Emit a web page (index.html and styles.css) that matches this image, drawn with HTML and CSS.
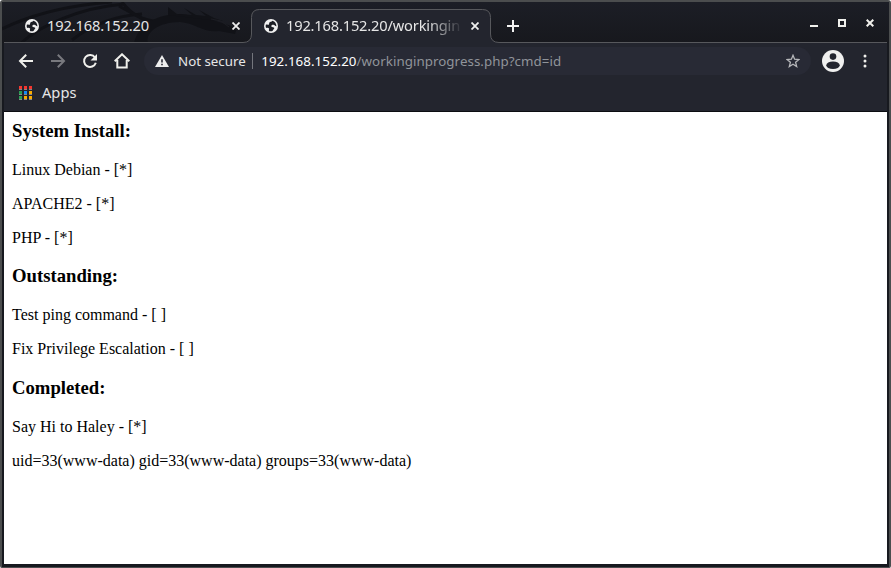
FILE: index.html
```html
<!DOCTYPE html>
<html lang="en">
<head>
<meta charset="utf-8">
<title>192.168.152.20/workinginprogress.php?cmd=id</title>
<link rel="stylesheet" href="styles.css">
</head>
<body>
<svg class="defs" aria-hidden="true">
  <symbol id="globe" viewBox="0 0 14 14">
    <circle cx="7" cy="7" r="7" fill="#f0f0f0"/>
    <path d="M8.400 1.700C7.600 3 6.300 2.600 5.400 3.600C4.800 4.400 5.600 5 4.800 5.700L2 5.500C1.500 6.500 1.600 8 2.200 9.100C3.400 8.300 4.600 8.700 5.200 9.800C4.700 10.700 4.800 11.900 5.400 12.200C6.600 12.500 8 12.300 8.800 11.800C8.600 10.600 10.300 10.300 10.300 9C10 7.600 8 8.400 7.300 7.400C7.100 6.300 8.200 5.600 9.500 5.800C10.800 6.100 11 7.300 12.400 7.200C12.500 4.800 10.900 2.400 8.400 1.700Z" fill="#1c1e25"/>
  </symbol>
</svg>
<div class="window">
  <header class="tabstrip">
    <svg class="backdrop" viewBox="0 0 887 41" aria-hidden="true">
      <g fill="none" stroke="#111217" stroke-width="3">
        <path d="M0 27C30 12 70 3 110 0"/>
        <path d="M19 41C38 24 76 6 122 2"/>
        <path d="M70 38C88 24 110 14 140 12"/>
        <path d="M117 4L144 19M120 0C130 13 140 18 157 20"/>
      </g>
      <path d="M132 41C136 25 151 13 175 12C189 12 197 17 208 17L235 26L233 32L217 29C201 31 193 21 178 20C156 20 143 31 146 41Z" fill="#111217"/>
      <path d="M166 5L175 12L190 13L182 6L194 13L204 14L197 8L212 16L221 19L208 18L166 13Z" fill="#111217"/>
      <path d="M209 17L219 19L227 25" fill="none" stroke="#1c1d23"/>
      <path d="M2 40.500H241Q249.500 40.500 249.500 32V15.500Q249.500 7.500 257.500 7.500H480.500Q488.500 7.500 488.500 15.500V32Q488.500 40.500 497 40.500H885V42H2Z" fill="#23252e"/>
      <path d="M2 40.500H241Q249.500 40.500 249.500 32V15.500Q249.500 7.500 257.500 7.500H480.500Q488.500 7.500 488.500 15.500V32Q488.500 40.500 497 40.500H885" fill="none" stroke="#57585c"/>
    </svg>
    <div class="tab">
      <svg class="globe"><use href="#globe"/></svg>
      <span class="tab-title">192.168.152.20</span>
      <svg class="close" viewBox="0 0 8 8"><path d="M.5 .5L7.500 7.500M7.500 .5L.5 7.500"/></svg>
    </div>
    <div class="tab">
      <svg class="globe"><use href="#globe"/></svg>
      <span class="tab-title fade">192.168.152.20/workingin</span>
      <svg class="close" viewBox="0 0 8 8"><path d="M.5 .5L7.500 7.500M7.500 .5L.5 7.500"/></svg>
    </div>
    <svg class="plus" viewBox="0 0 12 12"><path d="M6 0V12M0 6H12"/></svg>
    <div class="controls">
      <svg viewBox="0 0 8 8"><path d="M0 7H8"/></svg>
      <svg viewBox="0 0 8 8"><path d="M1 1H7V7H1Z"/></svg>
      <svg viewBox="0 0 8 8"><path d="M.7 .7L7.300 7.300M7.300 .7L.7 7.300"/></svg>
    </div>
  </header>
  <nav class="toolbar">
    <svg class="nav" viewBox="0 0 16 16"><path d="M15 8H2M8.200 1.800L2 8L8.200 14.200"/></svg>
    <svg class="nav dim" viewBox="0 0 16 16"><path d="M1 8H14M7.800 1.800L14 8L7.800 14.200"/></svg>
    <svg class="nav" viewBox="0 0 16 16"><path d="M13 4.500A6 6 0 1 0 13.800 9.800"/><path class="solid" d="M15 1V7.500H8.500Z"/></svg>
    <svg class="nav" viewBox="0 0 16 16"><path d="M3.300 7V14.500H12.700V7M.7 8.300L8 1.300L15.300 8.300"/></svg>
    <div class="omnibox">
      <svg class="warn" viewBox="0 0 14 12"><path d="M7 0L14 12H0Z" fill="#eee"/><path d="M7 4.300V7.600M7 8.700V10.200" stroke="#282a35" stroke-width="1.600"/></svg>
      <span class="secure">Not secure</span>
      <span class="divider"></span>
      <span class="url"><b>192.168.152.20</b>/workinginprogress.php?cmd=id</span>
      <svg class="star" viewBox="0 0 14 14"><path d="M7 1.300L8.600 5.200L12.900 5.500L9.600 8.300L10.700 12.500L7 10.200L3.300 12.500L4.400 8.300L1.100 5.500L5.400 5.200Z"/></svg>
    </div>
    <svg class="avatar" viewBox="0 0 22 22"><circle cx="11" cy="11" r="11" fill="#f0f0ef"/><circle cx="11" cy="6.600" r="3.300" fill="#23252e"/><ellipse cx="11" cy="15.300" rx="6.700" ry="3.800" fill="#23252e"/></svg>
    <svg class="dots" viewBox="0 0 4 14"><circle cx="2" cy="2" r="1.500"/><circle cx="2" cy="7" r="1.500"/><circle cx="2" cy="12" r="1.500"/></svg>
  </nav>
  <div class="bookmarks">
    <svg class="apps" viewBox="0 0 13 14">
      <path fill="#888" d="M0 3H3V4H0ZM5 3H8V4H5ZM10 3H13V4H10ZM0 8H3V9H0ZM5 8H8V9H5ZM10 8H13V9H10ZM0 13H3V14H0ZM5 13H8V14H5ZM10 13H13V14H10Z"/>
      <path fill="#f4352e" d="M0 0H3V3H0ZM5 0H8V3H5ZM10 0H13V3H10Z"/>
      <path fill="#299c52" d="M0 5H3V8H0ZM0 10H3V13H0Z"/>
      <path fill="#168bf4" d="M5 5H8V8H5Z"/>
      <path fill="#f9ab00" d="M10 5H13V8H10ZM5 10H8V13H5ZM10 10H13V13H10Z"/>
    </svg>
    <span class="label">Apps</span>
  </div>
  <main class="page">
    <h3>System Install:</h3>
    <p>Linux Debian - [*]</p>
    <p>APACHE2 - [*]</p>
    <p>PHP - [*]</p>
    <h3>Outstanding:</h3>
    <p>Test ping command - [ ]</p>
    <p>Fix Privilege Escalation - [ ]</p>
    <h3>Completed:</h3>
    <p>Say Hi to Haley - [*]</p>
    <p>uid=33(www-data) gid=33(www-data) groups=33(www-data)</p>
  </main>
</div>
</body>
</html>
```
FILE: styles.css
```css
* { box-sizing: border-box; }
body { margin: 0; background: #fff; overflow: hidden; }
svg { display: block; flex: none; }
.defs { position: absolute; width: 0; height: 0; }

.window {
  width: 891px;
  height: 568px;
  display: flex;
  flex-direction: column;
  border: 2px solid #4b4d4e;
  border-bottom-width: 1px;
  border-radius: 3px 3px 2px 2px;
  background: #17191f;
  font-family: "Noto Sans", sans-serif;
  color: #e6e6e6;
}

.tabstrip {
  position: relative;
  height: 41px;
  flex: none;
  display: flex;
  align-items: center;
  padding-top: 7px;
  background: linear-gradient(#1c1e26, #17181d);
}
.backdrop { position: absolute; left: 0; top: 0; width: 887px; height: 41px; }
.tab {
  position: relative;
  width: 239px;
  height: 34px;
  margin-left: 10px;
  padding: 0 9px 0 13px;
  display: flex;
  align-items: center;
}
.tab + .tab { margin-left: 0; }
.globe { width: 14px; height: 14px; margin-right: 8px; }
.tab-title {
  flex: 1;
  min-width: 0;
  margin-right: 8px;
  padding-bottom: 2px;
  white-space: nowrap;
  font-size: 14.670px;
  letter-spacing: -0.150px;
  line-height: 20px;
}
.fade {
  letter-spacing: -0.180px;
  mask-image: linear-gradient(to right, #000 calc(100% - 36px), transparent);
}
.close { width: 8px; height: 8px; margin-right: 2px; fill: none; stroke: #eee; stroke-width: 1.800; }
.plus { position: relative; width: 12px; height: 12px; margin-left: 17px; stroke: #f2f2f2; stroke-width: 2; }
.controls {
  position: relative;
  display: flex;
  gap: 20px;
  margin: -7px 15px 0 auto;
}
.controls svg { width: 8px; height: 8px; fill: none; stroke: #f0f0ec; stroke-width: 2; }

.toolbar {
  height: 35px;
  flex: none;
  margin: 0 2px;
  padding: 1px 14px 0;
  display: flex;
  align-items: center;
  background: #23252e;
}
.nav { width: 16px; height: 16px; margin-right: 16px; fill: none; stroke: #f0f0ec; stroke-width: 2; }
.nav .solid { fill: #f0f0ec; stroke: none; }
.dim { stroke: #78797e; }
.omnibox {
  width: 667px;
  height: 28px;
  margin-left: -2px;
  padding: 0 11px;
  display: flex;
  align-items: center;
  border-radius: 14px;
  background: #282a35;
  font-size: 13.330px;
  line-height: 20px;
  white-space: nowrap;
}
.warn { width: 14px; height: 12px; margin-right: 9px; }
.divider { width: 1px; height: 16px; margin: 0 8.500px 0 6px; background: #74767d; }
.url { color: #90949a; letter-spacing: 0.050px; }
.url b { color: #fff; font-weight: 400; }
.star { width: 14px; height: 14px; margin-left: auto; fill: none; stroke: #b6b7ba; stroke-width: 1.300; }
.avatar { width: 22px; height: 22px; margin-left: 11px; }
.dots { width: 4px; height: 14px; margin-left: 19px; fill: #f0f0ec; }

.bookmarks {
  height: 34px;
  flex: none;
  margin: 0 2px;
  padding: 0 0 4px 15px;
  display: flex;
  align-items: center;
  gap: 10px;
  border-bottom: 1px solid #0c0d11;
  background: #23252e;
  font-size: 14.670px;
  line-height: 20px;
}
.apps { width: 13px; height: 14px; }
.label { padding-bottom: 2px; }

.page {
  flex: 1;
  margin: 0 2px 3px;
  width: 883px;
  padding: 8px;
  background: #fff;
  color: #000;
  font: 16px "Liberation Serif", serif;
}
.page h3 { margin: 18.720px 0; font-size: 18.720px; }
.page h3:first-child { margin-top: 0; }
.page p { margin: 16px 0; }
```
